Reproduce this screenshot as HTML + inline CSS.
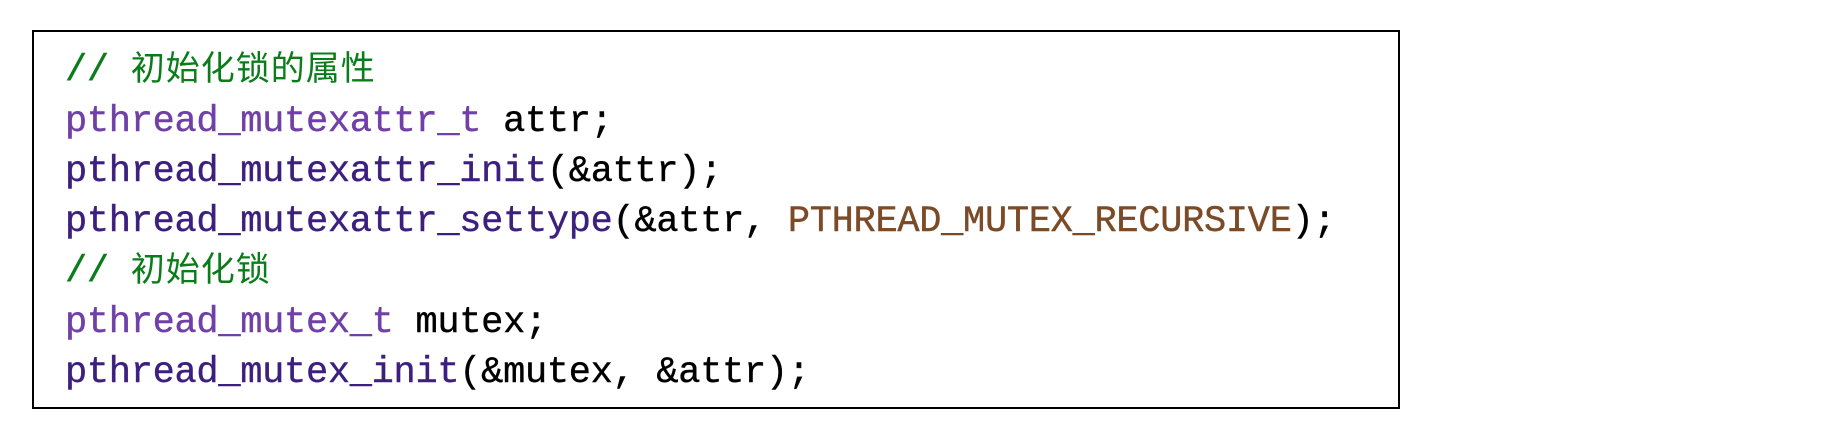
<!DOCTYPE html>
<html><head><meta charset="utf-8"><style>
html,body{margin:0;padding:0;background:#fff;width:1838px;height:438px;overflow:hidden}
.box{position:absolute;left:32px;top:30px;width:1364px;height:375px;border:2.5px solid #000;box-sizing:content-box}
.code{position:absolute;left:31px;top:14px;font-family:"Liberation Mono","Noto Sans CJK SC",monospace;font-size:37px;letter-spacing:-0.3px;line-height:50px;white-space:pre;color:#000;-webkit-text-stroke:0.4px currentColor}
.cj{font-size:34px;letter-spacing:1px;-webkit-text-stroke:0}
.c{color:#0a7d1a}.t{color:#7040a8}.f{color:#3c1f7e}.k{color:#7a4b26}
</style></head><body>
<div class="box"><div class="code"><span class="c">// <span class="cj">初始化锁的属性</span></span>
<span class="t">pthread_mutexattr_t</span> attr;
<span class="f">pthread_mutexattr_init</span>(&amp;attr);
<span class="f">pthread_mutexattr_settype</span>(&amp;attr, <span class="k">PTHREAD_MUTEX_RECURSIVE</span>);
<span class="c">// <span class="cj">初始化锁</span></span>
<span class="t">pthread_mutex_t</span> mutex;
<span class="f">pthread_mutex_init</span>(&amp;mutex, &amp;attr);</div></div>
</body></html>
